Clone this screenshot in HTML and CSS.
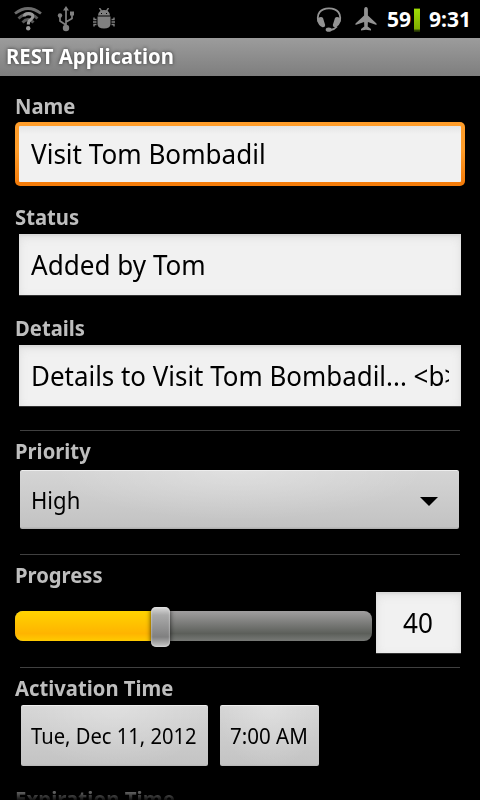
FILE: index.html
```html
<!DOCTYPE html>
<html lang="en">
<head>
<meta charset="utf-8">
<title>REST Application</title>
<link rel="stylesheet" href="styles.css">
</head>
<body>
<div class="screen">
  <header class="status-bar">
    <svg class="wifi" width="28" height="24" viewBox="0 0 28 24" fill="none" stroke-linecap="butt">
      <path d="M1 6.500Q14-3.500 27 6.500" stroke="#6c6c6c" stroke-width="2.800"/>
      <path d="M4.500 11.500Q14 2.500 23.500 11.500M8.500 15.500Q14 9.500 19.500 15.500" stroke="#585858" stroke-width="2.800"/>
      <path d="M10.300 9.500Q10.500 6.500 14.500 6.500Q19 6.500 18.800 9.500Q18.600 11.500 16.500 12.700Q14.300 14 14.300 17.500" stroke="#999" stroke-width="3"/>
      <circle cx="14.200" cy="21.200" r="2.200" fill="#999"/>
    </svg>
    <svg class="usb" width="18" height="26" viewBox="0 0 18 26" fill="none" stroke="#808080" stroke-width="1.700">
      <path d="M9 3V23M9 19L3 15V9M9 16L15 12.500V8"/>
      <path d="M9 0L12 4.500H6ZM13 5.500H17V9.500H13Z" fill="#808080" stroke="none"/>
      <circle cx="3" cy="9.500" r="2.200" fill="#808080" stroke="none"/>
      <circle cx="9" cy="22" r="3.200" fill="#808080" stroke="none"/>
    </svg>
    <svg class="bug" width="22" height="22" viewBox="0 0 22 22" fill="#808080">
      <path d="M5 7.500Q5.500 2 11 2Q16.500 2 17 7.500ZM4.500 8.500H17.500V16.500Q17 20.500 11 20.500Q5 20.500 4.500 16.500Z"/>
      <path d="M6.500 0L8.500 3M15.500 0L13.500 3M3.500 11.500H1V9.500M3.500 14H0M3.500 16.500H1V18.500M18.500 11.500H21V9.500M18.500 14H22M18.500 16.500H21V18.500" stroke="#808080" stroke-width="1.400" fill="none"/>
      <path d="M8 5H9V6H8ZM13 5H14V6H13Z" fill="#000"/>
    </svg>
    <svg class="headset" width="26" height="26" viewBox="0 0 26 26" fill="#929292">
      <path d="M2.500 15C0 7 4.500 1.300 13 1.300S26 7 23.500 15M21 19.500Q18.500 22.500 14.500 23" fill="none" stroke="#929292" stroke-width="1.800"/>
      <path d="M2 11Q5.500 8.800 7 11L9.200 18Q9.200 20.500 6.500 20.200Q2.500 19 1.300 13.500ZM24 11Q20.500 8.800 19 11L16.800 18Q16.800 20.500 19.500 20.200Q23.500 19 24.700 13.500Z"/>
      <ellipse cx="12.700" cy="22.700" rx="3" ry="2.100"/>
    </svg>
    <svg class="plane" width="22" height="24" viewBox="0 0 22 24" fill="#929292">
      <path d="M11 0Q12.900 0 12.900 3V8.500L21.500 16.500V18L12.900 15L12.700 19.500L16 22V23.500L11 22.700L6 23.500V22L9.300 19.500L9.100 15L.5 18V16.500L9.100 8.500V3Q9.100 0 11 0Z"/>
    </svg>
    <span class="clock-text percent">59</span>
    <span class="battery"></span>
    <span class="clock-text time">9:31</span>
  </header>
  <div class="title-bar"><h1 class="title">REST Application</h1></div>
  <main class="form">
    <section class="group">
      <h2 class="label">Name</h2>
      <div class="field focused"><span class="value">Visit Tom Bombadil</span></div>
    </section>
    <section class="group">
      <h2 class="label">Status</h2>
      <div class="field"><span class="value">Added by Tom</span></div>
    </section>
    <section class="group">
      <h2 class="label">Details</h2>
      <div class="field"><div class="clip"><span class="value">Details to Visit Tom Bombadil... &lt;b&gt;</span></div></div>
    </section>
    <hr class="divider first">
    <section class="priority">
      <h2 class="label">Priority</h2>
      <div class="spinner"><span class="value high">High</span><svg width="18" height="9" viewBox="0 0 18 9"><path d="M0 0H18L9 9Z"/></svg></div>
    </section>
    <hr class="divider">
    <section class="progress">
      <h2 class="label">Progress</h2>
      <div class="progress-row">
        <div class="slider"><div class="fill"></div><div class="thumb"></div></div>
        <div class="field number"><span class="value">40</span></div>
      </div>
    </section>
    <hr class="divider">
    <section class="activation">
      <h2 class="label">Activation Time</h2>
      <div class="buttons">
        <div class="button date"><span class="value">Tue, Dec 11, 2012</span></div>
        <div class="button hour"><span class="value">7:00 AM</span></div>
      </div>
    </section>
    <section class="expiration"><h2 class="label">Expiration Time</h2></section>
  </main>
</div>
</body>
</html>
```
FILE: styles.css
```css
* { box-sizing: border-box; }
body { margin: 0; background: #000; font-family: "Noto Sans", "Open Sans", sans-serif; }
.screen { width: 480px; height: 800px; overflow: hidden; display: flex; flex-direction: column; background: #000; }
.status-bar { height: 38px; flex: none; display: flex; align-items: flex-start; color: #fff; }
.status-bar svg { flex: none; }
.wifi { margin: 7px 0 0 14px; }
.usb { margin: 6px 0 0 15px; }
.bug { margin: 8px 0 0 18px; }
.headset { margin: 7px 0 0 201px; }
.plane { margin: 7px 0 0 13px; }
.clock-text { font-size: 21px; font-weight: 700; line-height: 38px; white-space: nowrap; }
.percent { width: 27px; margin-left: 10px; }
.battery { width: 6px; height: 24px; margin-top: 8px; background: linear-gradient(#3d5800 0 1px, #a0dc05 1px, #7fae00 21px, #385000 22px, #182400); }
.time { width: 45px; margin-left: 9px; }
.title-bar { height: 38px; flex: none; padding-left: 6px; background: linear-gradient(#9c9c9c, #7e7e7e); }
.title { margin: 0; color: #fff; font-size: 21px; line-height: 37px; white-space: nowrap; text-shadow: 0 0 4px #333; width: max-content; transform: scaleX(.966); transform-origin: 0 50%; }
.form { flex: 1; min-height: 0; padding: 18px 15px 0; overflow: hidden; }
.label { margin: 0; width: max-content; height: 24px; font-size: 21px; line-height: 24px; color: #bebebe; white-space: nowrap; transform: scaleX(.963); transform-origin: 0 50%; }
.group { height: 111px; }
.field { height: 61px; margin: 16px 4px 0; padding-left: 12px; display: flex; align-items: center; background: #f1f1f1; box-shadow: inset 0 2px 2px #d8d8d8, inset 0 3px 10px #dedede, 0 1px #333; }
.value { font-size: 27px; line-height: 40px; color: #000; white-space: nowrap; flex: none; transform: scaleX(.966); transform-origin: 0 50%; }
.group .label + .field { margin-top: 5px; }
.group .label + .focused { height: 64px; margin: 4px 0 0; border: 4px solid transparent; border-radius: 5px; background: linear-gradient(#e5e5e5, #f1f1f1 8px) padding-box, linear-gradient(#ff9d2a 45%, #f47c0a 95%) border-box; box-shadow: none; }
.clip { width: 418px; overflow: hidden; display: flex; }
.clip .value { transform: scaleX(.96); }
.divider { height: 1px; border: 0; margin: 0 5px; background: #404040; }
.first { margin-top: 3px; }
.priority { height: 123px; padding-top: 8px; }
.spinner { height: 59px; margin: 7px 6px 0 5px; padding: 0 21px 0 11px; display: flex; align-items: center; justify-content: space-between; border-radius: 2px; background: radial-gradient(ellipse at 50% 0, #ffffff44, transparent 60%), linear-gradient(#d5d5d5, #c3c3c3 96%, #aaa); box-shadow: inset 0 1px #eee; }
.spinner svg { margin-top: 3px; }
.value.high { font-size: 24px; transform: scaleX(.92); }
.progress { height: 112px; padding-top: 8px; }
.progress-row { display: flex; align-items: flex-start; gap: 4px; margin-top: 5px; }
.slider { position: relative; width: 357px; height: 30px; margin-top: 19px; border-radius: 8px; background: linear-gradient(#a09e9f, #5c5f5a 75%, #777976); }
.fill { width: 142px; height: 30px; border-radius: 8px 0 0 8px; background: linear-gradient(#ffd400, #ffb400 75%, #ffcb00); }
.thumb { position: absolute; left: 136px; top: -4px; width: 19px; height: 40px; border-radius: 5px; background: linear-gradient(#ddd, #aaa 20%, #808080 75%, #c9c9c9); box-shadow: inset 0 0 2px #eee, 0 0 5px #000b; }
.progress-row .number { width: 85px; margin: 0; padding-left: 27px; }
.activation { padding-top: 8px; }
.buttons { display: flex; gap: 12px; margin: 5px 0 0 6px; }
.button { height: 61px; display: flex; align-items: center; padding-left: 10px; border-radius: 2px; background: radial-gradient(ellipse at 50% 0, #ffffff44, transparent 75%), linear-gradient(#d5d5d5, #c4c4c4 97%, #b5b5b5); box-shadow: inset 0 1px #eee; }
.button .value { font-size: 21.500px; transform: scaleX(.938); }
.button.hour .value { transform: scaleX(.955); }
.date { width: 187px; }
.hour { width: 99px; }
.expiration { padding-top: 21px; }
.expiration .label { transform: scaleX(.975); color: transparent; background: linear-gradient(#777 3px, #111 13px); background-clip: text; }
```
